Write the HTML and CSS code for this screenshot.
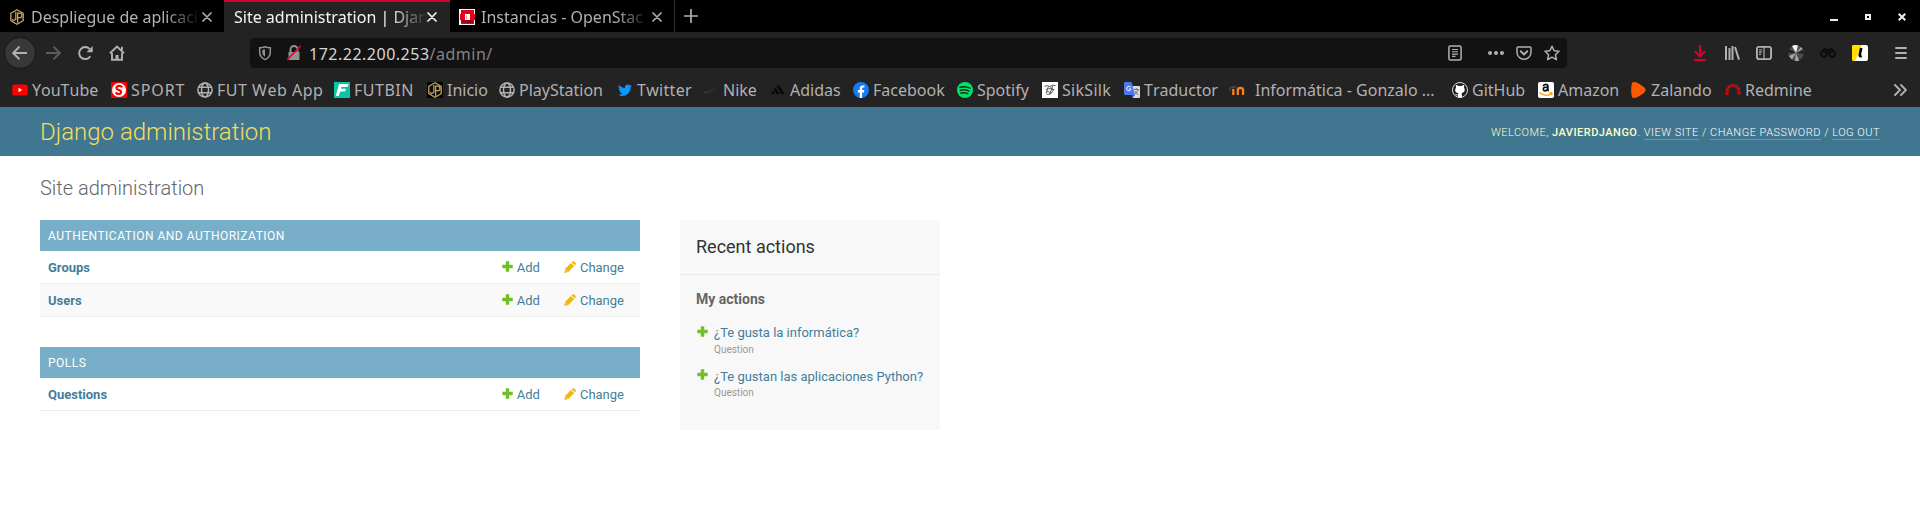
FILE: index.html
```html
<!DOCTYPE html>
<html lang="en">
<head>
<meta charset="utf-8">
<title>Site administration | Django site admin</title>
<link rel="stylesheet" href="styles.css">
</head>
<body>
<svg class="defs" width="0" height="0">
  <symbol id="jp" viewBox="0 0 16 16"><path d="M8 .8 14.2 4.3v7.4L8 15.2 1.8 11.7V4.3z" fill="#0c0a05" stroke="#c4a563" stroke-width="1.300"/><path d="M6.800 3v7.400L4.300 11.700 3.400 10M8.600 14V4.200h2.200a1.800 1.800 0 0 1 0 4.400H8.600" fill="none" stroke="#c4a563" stroke-width="1.200"/></symbol>
  <symbol id="globe" viewBox="0 0 16 16"><g fill="none" stroke="#b1b1b1" stroke-width="1.500"><circle cx="8" cy="8" r="7.100"/><ellipse cx="8" cy="8" rx="3.500" ry="7"/><path d="M1.500 5.300h13M1.500 10.700h13"/></g></symbol>
  <symbol id="close" viewBox="0 0 10 10"><path d="M1 1l8 8M9 1L1 9" fill="none" stroke="currentColor" stroke-width="1.700" stroke-linecap="round"/></symbol>
  <symbol id="plus" viewBox="0 0 11 11"><path d="M3.800.3h3.400v3.500h3.500v3.400H7.200v3.500H3.800V7.200H.3V3.800h3.500z" fill="#70bf2b"/></symbol>
  <symbol id="pencil" viewBox="0 0 12 12"><path d="M8.200.7Q9.200-.3 10.200.6l1.200 1.200q.9 1 0 1.900l-.6.600L7.500 1.300zM6.900 1.900 10.200 5.100 4.300 11 .3 11.900 1.200 7.800z" fill="#efb80b"/><path d="M1.700 9 3.100 10.400" stroke="#fff" stroke-width=".6"/></symbol>
</svg>

<header class="browser">
  <div class="tabs">
    <div class="tab tab-first"><svg class="fav" viewBox="0 0 16 16"><use href="#jp"/></svg><span class="tab-title">Despliegue de aplicaci</span><svg class="close"><use href="#close"/></svg></div>
    <div class="tab tab-active"><span class="tab-title">Site administration | Djan</span><svg class="close"><use href="#close"/></svg></div>
    <div class="tab tab-last"><svg class="fav" viewBox="0 0 16 16"><path fill="#fff" d="M0 0h16v16H0z"/><path fill="#e3001b" d="M2 1h13v4h1v6h-1v4H2v-4H1V5h1z"/><path fill="#a30012" d="M3 11h11v3H3z"/><path fill="#fff" d="M6 5h5v6H6z"/><path fill="#e98b95" d="M7 6h1v4H7z"/></svg><span class="tab-title">Instancias - OpenStac</span><svg class="close"><use href="#close"/></svg></div>
    <svg class="newtab" viewBox="0 0 14 14"><path d="M7 .5v13M.5 7h13" stroke="#b1b1b1" stroke-width="1.700" stroke-linecap="round"/></svg>
    <div class="window-controls">
      <svg width="8" height="16"><path d="M0 10h8v2H0z" fill="#eee"/></svg>
      <svg width="6" height="16"><path d="M1 6h4v4H1z" fill="none" stroke="#eee" stroke-width="2"/></svg>
      <svg width="8" height="16"><path d="M.7 4.700l6.600 6.600M7.300 4.700.7 11.300" stroke="#eee" stroke-width="2"/></svg>
    </div>
  </div>

  <div class="toolbar">
    <div class="nav">
      <span class="back"><svg viewBox="0 0 16 16"><path d="M15 8H1.500M7.500 1.700 1.200 8l6.300 6.300"/></svg></span>
      <svg class="dim" viewBox="0 0 16 16"><path d="M1 8h13.500M8.500 1.700 14.800 8l-6.300 6.300"/></svg>
      <svg viewBox="0 0 16 16"><path d="M13.300 11.200A6 6 0 1 1 12.600 4"/><path d="M15.700 1v6.200H9.500z" fill="#b1b1b1" stroke="none"/></svg>
      <svg viewBox="0 0 16 16"><path d="M1 8.200 8 1.500l7 6.700M3 8v6.700h10V8M13 5V1.800"/><path d="M6.500 15v-5h3v5z" fill="#b1b1b1" stroke="none"/></svg>
    </div>
    <div class="urlbar">
      <svg class="shield" viewBox="0 0 14 16"><path d="M7 1.800c1.800.8 3.400 1 5.300 1V7c0 3.800-2 6.200-5.300 7.600C3.700 13.200 1.700 10.800 1.700 7V2.800c1.900 0 3.500-.2 5.300-1z"/><path d="M7 4.300v7.500C5 10.500 4.300 9 4.300 7V5z" fill="#929292" stroke="none"/></svg>
      <svg class="lock" viewBox="0 0 16 16"><path d="M4.500 7V4.500a3.500 3.500 0 0 1 7 0V7"/><path d="M2.500 7h11v8h-11z" fill="#929292" stroke="none"/><path d="M1 15 14.500 1" stroke="#e8002f" stroke-width="1.700"/></svg>
      <span class="url"><b>172.22.200.253</b>/admin/</span>
      <div class="url-actions">
        <svg class="reader" viewBox="0 0 16 16"><rect x="1.900" y="1" width="12.200" height="14" rx="1.500"/><path d="M5 4.500h6M5 6.800h6M5 9.100h6M5 11.400h3.500" stroke-width="1.100"/></svg>
        <svg viewBox="0 0 16 16"><g fill="#b1b1b1" stroke="none"><circle cx="2" cy="8" r="2"/><circle cx="8" cy="8" r="2"/><circle cx="14" cy="8" r="2"/></g></svg>
        <svg viewBox="0 0 16 16"><path d="M2 2h12q1 0 1 1v4.300a7 7 0 0 1-14 0V3q0-1 1-1z"/><path d="M4.700 6.300 8 9.500l3.300-3.200" stroke-width="1.900" stroke-linecap="round"/></svg>
        <svg viewBox="0 0 16 16"><path d="M8 1.200 10.100 5.700 15 6.300 11.400 9.700 12.400 14.700 8 12.200 3.600 14.700 4.600 9.700 1 6.300 5.900 5.700z" stroke-linejoin="round"/></svg>
      </div>
    </div>
    <div class="extensions">
      <svg viewBox="0 0 16 16"><path d="M8 0v11M2.800 6.200 8 11.300l5.200-5.100M2 15h12" stroke="#d7002b" stroke-width="2"/></svg>
      <svg viewBox="0 0 16 16"><path d="M2 1v14M5.500 3v12M8.500 1v14M11 2l4 12.600" stroke-width="2"/></svg>
      <svg viewBox="0 0 16 16"><rect x=".9" y="1.900" width="14.200" height="12.200" rx="2"/><path d="M8 2v12M3 5h3M3 7.200h3M3 9.400h2" stroke-width="1.200"/></svg>
      <svg viewBox="0 0 16 16"><circle cx="8" cy="8" r="7.800" fill="#4c4c4c" stroke="none"/><path d="M8 8 4 1a8 8 0 0 1 6-.5z" fill="#f3f3f3" stroke="none"/><path d="M8 8 1 11l3 3.500zM8 8l-1 8h4z" fill="#aaa" stroke="none"/><path d="M8 8 1 4l-1 4zM9 8l6-3 1 4z" fill="#222" stroke="none"/><path d="M8 8l5-6 1.500 2z" fill="#aaa" stroke="none"/></svg>
      <svg viewBox="0 0 16 16"><g stroke="#0b0b0b" stroke-width="1.800"><circle cx="3.700" cy="9" r="2.800"/><circle cx="12.300" cy="9" r="2.800"/><path d="M6 8h4M3 5.300Q5 2.500 7 5.500h2q2-3 4-.2"/></g></svg>
      <svg viewBox="0 0 16 16"><rect width="16" height="16" rx="2" fill="#fff" stroke="none"/><path d="M2 0h8L3 16H2a2 2 0 0 1-2-2V2a2 2 0 0 1 2-2z" fill="#ffdf00" stroke="none"/><path d="M9.200 3 7.700 10q-.3 1.600 2 1" stroke="#000" stroke-width="2.600"/></svg>
      <svg class="menu" viewBox="0 0 16 16"><path d="M3 3h10M3 8h10M3 13h10" stroke-width="2" stroke-linecap="round"/></svg>
    </div>
  </div>

  <nav class="bookmarks">
    <a><svg viewBox="0 0 16 16"><rect x=".3" y="2.500" width="15.400" height="11" rx="2.600" fill="#f00"/><path d="M6.500 5.800v4.400L10.300 8z" fill="#fff"/></svg><span>YouTube</span></a>
    <a><svg viewBox="0 0 16 16"><path d="M0 0h16v16H0z" fill="#f00"/><circle cx="8" cy="8" r="7" fill="#fff"/><path d="M11.200 5.200Q9.500 3.300 7 4 4.500 5.200 6 7.200l3.500 1.500Q11 10.500 9 11.800 6.500 12.500 4.600 10.600" fill="none" stroke="#f00" stroke-width="2.200"/></svg><span class="wider">SPORT</span></a>
    <a><svg><use href="#globe"/></svg><span class="wide">FUT Web App</span></a>
    <a><svg viewBox="0 0 16 16"><path d="M0 0h16v16H0z" fill="#07c6a3"/><path d="M5 2h9.500L13.500 5H7.300L7 6.800h5l-1 2.800H6.200L4.700 14H1.700z" fill="#fff"/></svg><span class="wide">FUTBIN</span></a>
    <a><svg class="on-black"><use href="#jp"/></svg><span>Inicio</span></a>
    <a><svg><use href="#globe"/></svg><span>PlayStation</span></a>
    <a><svg viewBox="0 0 16 16"><path d="M15 4.100l-1.500 1.500C13.500 10.500 10 14 5.600 14 4 14 2.500 13.500 1.300 12.700c1.500.1 2.900-.3 4-1.200-1.300 0-2.300-.9-2.600-2h1.200C2.500 9 1.600 7.900 1.600 6.600l1.300.3C1.600 6 1.300 4.400 2.100 3.100 3.600 4.900 5.600 6 8 6.100 7.500 3.700 9 2.500 10.700 2.500q1.200 0 2.100.9l1.900-.7-1.200 1.600z" fill="#0d96f6"/></svg><span class="loose">Twitter</span></a>
    <a><svg viewBox="0 0 16 16"><path d="M15 5 4.500 9.700Q0 11.200 1.500 7.500q-2.300 4.500 3 3.200z" fill="#444"/></svg><span>Nike</span></a>
    <a><svg viewBox="0 0 16 16"><path d="M6.500 4 8.700 2.700 14.500 12h-3.300zM3.500 7.200l2.300-1.300L9.800 12H6.600zM1 10l2.200-1.300 2 3.300h-3z" fill="#080808"/></svg><span>Adidas</span></a>
    <a><svg viewBox="0 0 16 16"><circle cx="8" cy="8" r="8" fill="#137bf5"/><path d="M6.800 16v-5.600H4.900V8h1.900V6.300Q6.900 3.400 9.700 3.500l1.700.1v2H10Q9.100 5.700 9.100 6.700V8h2.200l-.4 2.400H9.100V16z" fill="#fff"/></svg><span>Facebook</span></a>
    <a><svg viewBox="0 0 16 16"><circle cx="8" cy="8" r="8" fill="#00e465"/><path d="M3 5.300Q8 3.700 13 6.200M3.400 8.300q4.300-1.300 8.500.9M3.900 11q3.800-1 7 .8" fill="none" stroke="#142b1d" stroke-width="1.500" stroke-linecap="round"/></svg><span>Spotify</span></a>
    <a><svg viewBox="0 0 16 16"><path d="M0 0h16v16H0z" fill="#fff"/><path d="M2.500 4.500q3-2 5 0 3-2 6-1M6.500 4 4 11.500M11 3.500 7.500 12.500M4 7.500q4-2 8 0M12 7l-3 4.500q-2 1.500-4.500.5M4.500 9l5 2M8 4.500l3.500 4" fill="none" stroke="#555" stroke-width=".9"/></svg><span class="loose">SikSilk</span></a>
    <a><svg viewBox="0 0 16 16"><path d="M7 4h8q1 0 1 1v10q0 1-1 1H9z" fill="#dadada"/><path d="M9.500 7.500H15M12.300 6v1.500M14 8q-1 3-4 4.500M11 9l3 4" fill="none" stroke="#607078" stroke-width=".9"/><path d="M1 0h6.500l3.500 13H1q-1 0-1-1V1q0-1 1-1z" fill="#4c78ef"/><path d="M11 13 8 16l-.8-3z" fill="#3948c4"/><path d="M6.600 5.200A2.200 2.200 0 1 0 7 7H4.900" fill="none" stroke="#fff" stroke-width="1"/></svg><span>Traductor</span></a>
    <a><svg viewBox="0 0 16 16"><path d="M0 5.500 5 3.500l3 1.500-4 1.500z" fill="#51433b"/><path d="M4.300 13V7M8.800 13V8q0-2 2.600-2t2.700 2v5" fill="none" stroke="#f98012" stroke-width="2.300"/><path d="M1 6v3" stroke="#555"/></svg><span class="indent">Informática - Gonzalo ...</span></a>
    <a><svg viewBox="0 0 16 16"><circle cx="8" cy="8" r="7.500" fill="#202020" stroke="#eee" stroke-width=".9"/><path d="M4 3q1.500 0 2.400.9h3.200Q10.500 3 12 3q.4 1.300 0 2.200 2.400 4.900-2.300 5.700l.3 4.300q-2 .7-4 0v-1.700q-2 .2-3-1.700 1.300.1 1.800.8.700.3 1.200 0l.3-1.400Q1.600 10.400 4 5.200 3.600 4.300 4 3z" fill="#fff"/></svg><span>GitHub</span></a>
    <a><svg viewBox="0 0 16 16"><rect width="16" height="16" rx="1.800" fill="#fff"/><path d="M5.300 4.200Q5.700 2.300 7.700 2.300q2.200 0 2.200 2v3.400q0 .7.800 1.500M9.800 5Q5 5 5.300 7.300q.3 1.600 2 1.500Q9.700 8.500 9.800 5" fill="none" stroke="#111" stroke-width="1.700"/><path d="M1.500 10.500q6 5.300 12.300 1M11.500 10.700q3.300-.8 2.200 2.600" fill="none" stroke="#ff9900" stroke-width="1.300"/></svg><span>Amazon</span></a>
    <a><svg viewBox="0 0 16 16"><path d="M2.800.3Q5.200-.5 9.800 2.300q5.900 3.700 5.900 5.700t-5.900 5.700q-4.600 2.800-7 2Q1.200 15 1.200 8T2.800.3z" fill="#ff5a00"/></svg><span class="nudge">Zalando</span></a>
    <a><svg viewBox="0 0 16 16"><path d="M2 13V9.500a6 6 0 0 1 12 0V13" fill="none" stroke="#c40d0d" stroke-width="3.200" stroke-dasharray="3 .6"/></svg><span>Redmine</span></a>
    <svg class="overflow" viewBox="0 0 14 14"><path d="M2 2l5 5-5 5M8 2l5 5-5 5" fill="none" stroke="#b1b1b1" stroke-width="1.900" stroke-linecap="round"/></svg>
  </nav>
</header>

<div class="django-header">
  <div class="brand">Django administration</div>
  <div class="user-tools">Welcome, <strong>javierdjango</strong>. <a>View site</a> / <a>Change password</a> / <a>Log out</a></div>
</div>

<main class="content">
  <h1>Site administration</h1>
  <div class="columns">
    <div class="apps">
      <section class="module">
        <h2>Authentication and Authorization</h2>
        <div class="row"><strong>Groups</strong><a class="add"><svg><use href="#plus"/></svg>Add</a><a class="change"><svg><use href="#pencil"/></svg>Change</a></div>
        <div class="row alt"><strong>Users</strong><a class="add"><svg><use href="#plus"/></svg>Add</a><a class="change"><svg><use href="#pencil"/></svg>Change</a></div>
      </section>
      <section class="module">
        <h2>Polls</h2>
        <div class="row"><strong>Questions</strong><a class="add"><svg><use href="#plus"/></svg>Add</a><a class="change"><svg><use href="#pencil"/></svg>Change</a></div>
      </section>
    </div>
    <aside class="recent">
      <h2>Recent actions</h2>
      <h3>My actions</h3>
      <ul>
        <li><svg><use href="#plus"/></svg><div><a>¿Te gusta la informática?</a><small>Question</small></div></li>
        <li><svg><use href="#plus"/></svg><div><a>¿Te gustan las aplicaciones Python?</a><small>Question</small></div></li>
      </ul>
    </aside>
  </div>
</main>
</body>
</html>
```
FILE: styles.css
```css
* { box-sizing: border-box; }
body { margin: 0; height: 512px; overflow: hidden; background: #fff; color: #333; font: 13px/16px Roboto, sans-serif; }
h1, h2, h3, ul { margin: 0; padding: 0; font-weight: 400; }
svg { display: block; flex: none; }
.defs { position: absolute; }

/* Browser chrome */
.browser { height: 107px; background: #232323; font: 16px/22px "Noto Sans", sans-serif; font-kerning: none; color: #b1b1b1; }
.tabs { display: flex; height: 32px; background: #000; }
.tab { display: flex; align-items: center; height: 32px; padding-top: 2px; }
.tab-first { width: 224px; padding-left: 9px; }
.tab-active { width: 226px; padding-left: 10px; background: #232323; border-top: 2px solid #d7002b; padding-top: 0; color: #f5f5f5; }
.tab-last { width: 225px; padding-left: 9px; border-right: 1px solid #333; }
.fav { width: 16px; height: 16px; margin-right: 6px; }
.tab-title { width: 171px; margin-right: -7px; white-space: nowrap; -webkit-mask-image: linear-gradient(to right, #000 134px, transparent 170px); mask-image: linear-gradient(to right, #000 134px, transparent 170px); }
.tab-active .tab-title { width: 195px; -webkit-mask-image: linear-gradient(to right, #000 155px, transparent 194px); mask-image: linear-gradient(to right, #000 155px, transparent 194px); }
.close { width: 10px; height: 10px; margin-left: 7px; }
.tab-active .close { margin-left: 5px; }
.newtab { width: 14px; height: 14px; margin: 9px 0 0 9px; }
.window-controls { display: flex; align-items: center; gap: 27px; margin-left: auto; padding: 2px 14px 0 0; }

.toolbar { display: flex; align-items: center; height: 42px; }
.toolbar svg { width: 16px; height: 16px; fill: none; stroke: #b1b1b1; stroke-width: 1.9; }
.nav { display: flex; align-items: center; gap: 16px; width: 246px; padding-left: 4px; }
.back { display: flex; align-items: center; justify-content: center; width: 32px; height: 32px; border: 1px solid #181818; border-radius: 50%; background: #383838; margin-right: -7px; }
.nav .dim { stroke: #5c5c5c; }
.urlbar { display: flex; align-items: center; width: 1317px; height: 30px; margin: 0 0 0 4px; padding-left: 8px; border-radius: 4px; background: #121212; }
.toolbar .shield { width: 14px; stroke: #929292; stroke-width: 1.5; }
.toolbar .lock { margin-left: 14px; stroke: #929292; }
.url { margin-left: 7px; padding-top: 1px; color: #838383; letter-spacing: .5px; }
.url b { font-weight: 400; color: #d6d6d6; }
.url-actions { display: flex; gap: 12px; margin-left: auto; padding-right: 7px; }
.url-actions .reader { margin-right: 13px; }
.toolbar .url-actions svg { stroke-width: 1.5; }
.extensions { display: flex; gap: 16px; margin-left: auto; padding-right: 11px; }
.toolbar .menu { margin-left: 9px; }

.bookmarks { display: grid; grid-template-columns: 99px 86px 137px 93px 72px 118px 86px 67px 83px 104px 85px 82px 105px 223px 86px 92px 95px 160px 1fr; align-items: center; height: 32px; padding-left: 12px; }
.bookmarks a { display: flex; align-items: center; gap: 4px; white-space: nowrap; }
.bookmarks a svg { width: 16px; height: 16px; }
.bookmarks .on-black { background: #000; }
.bookmarks .loose { letter-spacing: .3px; }
.bookmarks .wide { letter-spacing: .5px; }
.bookmarks .wider { letter-spacing: .9px; }
.bookmarks .indent { margin-left: 6px; }
.bookmarks .nudge { margin-left: 1px; }
.bookmarks .overflow { width: 14px; height: 14px; margin-left: 8px; }

/* Admin header */
.django-header { display: flex; align-items: center; justify-content: space-between; height: 49px; padding: 0 40px; background: #417690; color: #ffc; }
.brand { color: #f5dd5d; font-size: 24px; line-height: 28px; font-weight: 300; }
.user-tools { padding-top: 2px; font-size: 11px; font-weight: 300; letter-spacing: .49px; text-transform: uppercase; }
.user-tools strong { font-weight: 500; }
.user-tools a { color: #fff; border-bottom: 1px solid rgba(255, 255, 255, .25); }

/* Admin content */
.content { padding: 20px 40px; }
.content h1 { height: 24px; margin-bottom: 20px; color: #666; font-size: 20px; line-height: 24px; font-weight: 300; }
.columns { display: flex; gap: 40px; align-items: flex-start; }
.apps { display: flex; flex-direction: column; gap: 30px; width: 600px; }
.module h2 { height: 31px; padding: 9px 8px 7px; background: #79aec8; color: #fff; font-size: 12px; line-height: 15px; letter-spacing: .5px; text-transform: uppercase; }
.row { display: flex; align-items: center; height: 33px; padding: 2px 16px 0 8px; border-bottom: 1px solid #eee; color: #447e9b; }
.alt { background: #f9f9f9; }
.row strong { flex: 1; font-weight: 700; }
.add, .change { display: flex; align-items: center; }
.add svg { width: 11px; height: 11px; margin: 0 4px 3px 0; }
.change { margin-left: 24px; }
.change svg { width: 12px; height: 12px; margin: 0 4px 3px 0; }
.recent { width: 260px; height: 210px; background: #f8f8f8; }
.recent h2 { height: 55px; padding: 16px; border-bottom: 1px solid #eaeaea; font-size: 18px; line-height: 22px; color: #333; }
.recent h3 { padding: 16px 16px 0; color: #666; font-size: 14px; line-height: 16px; font-weight: 700; }
.recent ul { display: grid; gap: 11px; padding: 18px 16px 0; list-style: none; }
.recent li { display: flex; gap: 6px; height: 32px; }
.recent li svg { width: 11px; height: 11px; margin: 1px 0 0 1px; }
.recent a { display: block; color: #447e9b; white-space: nowrap; }
.recent small { display: block; padding-top: 1px; color: #999; font-size: 10px; line-height: 16px; }
.recent li + li a { padding-top: 1px; }
.recent li + li small { padding-top: 0; }
```
